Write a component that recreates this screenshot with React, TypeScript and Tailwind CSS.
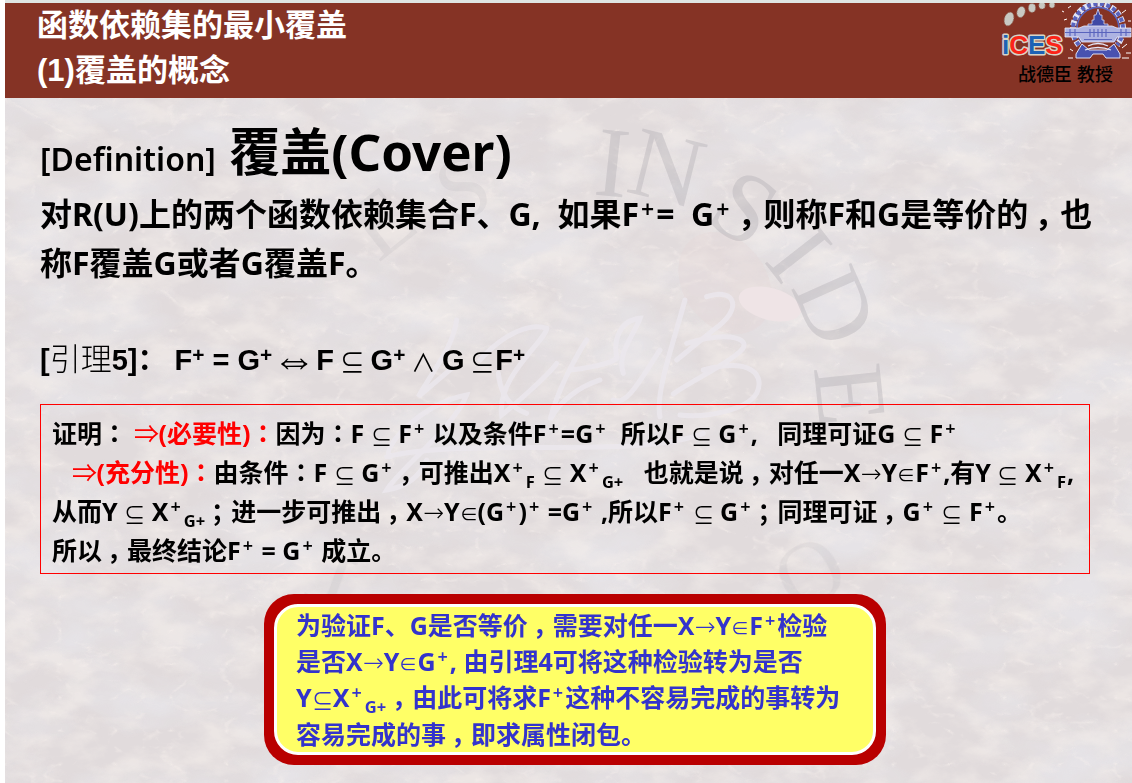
import React from "react";

type Kids = { children: React.ReactNode };

const Sup = ({ children }: Kids) => (
  <sup className="relative top-0 mx-0.5 align-[8px] text-[0.72em] leading-none font-semibold">{children}</sup>
);
const Sub = ({ children }: Kids) => (
  <sub className="relative bottom-0 mx-px align-[-6px] text-[0.66em] leading-none">{children}</sub>
);
const Arrow = ({ children }: Kids) => (
  <span className="leading-none font-extralight [font-family:'DejaVu_Sans',sans-serif]">{children}</span>
);
const Sym = ({ children }: Kids) => (
  <span className="align-[-2px] text-[0.85em] leading-none font-extralight [font-family:'DejaVu_Sans',sans-serif]">{children}</span>
);
const In = () => (
  <span className="text-[0.72em] leading-none font-extralight [font-family:'DejaVu_Sans',sans-serif]">∈</span>
);
const Mark = ({ children }: Kids) => (
  <span className="mr-[0.3em] ml-[0.2em] leading-none [font-family:'Noto_Sans_CJK_SC',sans-serif] [font-feature-settings:'halt']">{children}</span>
);
const Colon = () => (
  <span lang="zh-TW" className="leading-none [font-family:'Noto_Sans_CJK_TC',sans-serif]">：</span>
);

function Backdrop() {
  return (
    <svg className="absolute inset-0 h-full w-full" preserveAspectRatio="xMidYMid slice" viewBox="0 0 1127 685" aria-hidden="true">
      <defs>
        <filter id="shade" x="0" y="0" width="100%" height="100%">
          <feTurbulence type="fractalNoise" baseFrequency="0.009 0.016" numOctaves="4" seed="7" />
          <feColorMatrix values="0 0 0 0 0.8  0 0 0 0 0.785  0 0 0 0 0.815  2.6 0 0 0 -1" />
        </filter>
        <filter id="warm" x="0" y="0" width="100%" height="100%">
          <feTurbulence type="fractalNoise" baseFrequency="0.022 0.04" numOctaves="5" seed="12" />
          <feColorMatrix values="0 0 0 0 0.91  0 0 0 0 0.86  0 0 0 0 0.83  0 3 0 0 -1.3" />
        </filter>
        <filter id="glint" x="0" y="0" width="100%" height="100%">
          <feTurbulence type="turbulence" baseFrequency="0.018 0.03" numOctaves="4" seed="3" />
          <feColorMatrix values="0 0 0 0 0.95  0 0 0 0 0.89  0 0 0 0 0.86  -5 0 0 0 0.75" />
        </filter>
      </defs>
      <rect width="1127" height="685" fill="#e1dbdc" />
      <rect width="1127" height="685" filter="url(#shade)" opacity="0.85" />
      <rect width="1127" height="685" filter="url(#warm)" opacity="0.55" />
      <rect width="1127" height="685" filter="url(#glint)" opacity="0.6" />
      <ellipse cx="720" cy="185" rx="42" ry="55" fill="#e4d8d7" opacity="0.35" transform="rotate(-35 720 185)" />
      <ellipse cx="765" cy="206" rx="32" ry="16" fill="#efe4e6" transform="rotate(15 765 206)" />
      <g fill="#aaa6ad" opacity="0.34" fontFamily="'Liberation Serif', serif" fontWeight="400" fontSize="100" textAnchor="middle">
        <text transform="translate(604 98) rotate(6)">I</text>
        <text transform="translate(654 102) rotate(14)">N</text>
        <text transform="translate(722 138) rotate(32)">S</text>
        <text transform="translate(768 176) rotate(52)">I</text>
        <text transform="translate(800 222) rotate(66)">D</text>
        <text transform="translate(812 300) rotate(84)">E</text>
      </g>
      <g fill="#aaa6ad" opacity="0.15" fontFamily="'Liberation Serif', serif" fontWeight="400" fontSize="90" textAnchor="middle">
        <text transform="translate(395 148) rotate(-38)">E</text>
        <text transform="translate(468 118) rotate(-20)">S</text>
        <text transform="translate(340 460) rotate(200)">T</text>
        <text transform="translate(790 450) rotate(150)">O</text>
      </g>
      <g transform="translate(335 162) scale(.3333)" fill="none" stroke="#ece8ee" strokeWidth="15" strokeLinecap="round" opacity="0.8">
        <path d="M350 180C340 260 280 330 235 410L335 325" />
        <path d="M150 590C120 570 240 430 380 405C345 500 175 630 140 690C200 680 240 650 260 600" />
        <path d="M420 300C500 210 580 190 620 205C620 240 470 350 485 465C530 430 630 340 650 310" />
        <path d="M475 340C480 390 500 440 560 460" />
        <path d="M740 240C700 300 650 400 630 480C660 420 720 380 780 360" />
        <path d="M690 330C780 320 840 300 830 290C820 240 840 180 900 175C880 230 830 280 850 340" />
        <path d="M820 420C860 440 900 360 960 270" />
        <path d="M1035 120C1000 250 945 400 960 470" />
        <path d="M1100 110C1190 80 1210 150 1120 210L1010 300M1040 250C1180 210 1240 240 1200 275C1150 320 1040 370 1000 402M1090 330C1240 290 1275 350 1250 400C1220 450 1100 475 1020 465" />
        <path d="M140 590C400 530 900 600 1090 520" />
      </g>
    </svg>
  );
}

function Emblem() {
  return (
    <svg className="block h-[60px] w-[132px]" viewBox="0 0 132 60" role="img" aria-label="iCES">
      <g fill="#c9c9c3" stroke="#8d6a5c" strokeWidth=".8" strokeDasharray="1.5 1">
        <ellipse cx="9" cy="16" rx="4.6" ry="7" transform="rotate(18 9 16)" />
        <ellipse cx="21" cy="9" rx="4" ry="5.6" transform="rotate(18 21 9)" />
        <ellipse cx="32" cy="5" rx="3.6" ry="4.4" />
        <ellipse cx="42" cy="2.5" rx="3.2" ry="3.6" />
        <ellipse cx="52" cy="2" rx="2.8" ry="3" />
      </g>
      <text x="2" y="51" fontFamily="'Liberation Sans', sans-serif" fontWeight="700" fontSize="26" stroke="#d9d3c5" strokeWidth="3" strokeLinejoin="round" paintOrder="stroke">
        <tspan fill="#1d62b4">i</tspan>
        <tspan fill="#fb2418">C</tspan>
        <tspan fill="#1d62b4">E</tspan>
        <tspan fill="#fb2418">S</tspan>
      </text>
      <g fill="none" stroke="#5963bd">
        <path d="M79 42A25 25 0 1 1 117 42" stroke="#e2e4f4" strokeWidth="6" strokeDasharray="5 2" />
        <path d="M79 42A25 25 0 1 1 117 42" strokeWidth="4" strokeDasharray="4 2.5" />
        <path d="M82 39A21 21 0 1 1 114 39" strokeWidth="1.6" />
      </g>
      <path d="M98 6l2 6h2v5h2v4h4v4H88v-4h4v-4h2v-5h2z" fill="#3f49a5" stroke="#d8dbf2" strokeWidth=".8" />
      <path d="M65 25h14l5-2h28l5 2h14v9h-14l-3 5H82l-3-5H65z" fill="#aeb3e2" stroke="#eceefb" strokeWidth=".8" />
      <path d="M65 29.500h66M84 36.500h28M90 26v8M94 26v8M98 26v8M102 26v8M106 26v8M70 26v7M75 26v7M121 26v7M126 26v7" stroke="#5963bd" strokeWidth="1.1" />
      <path d="M76 51l6-10 7 6h18l7-6 6 10v4h-14l-3-4H93l-3 4H76z" fill="#4852b0" stroke="#dfe1f5" />
      <path d="M88 43q10-5 20 0M85 47q13-5 26 0" fill="none" stroke="#e5e7f8" strokeWidth="1.3" />
      <path d="M62 8l2 1M64 17l3-1M70 46l3 2M68 55h5M122 10l4-3M128 18h3M122 45l5-4M122 55h7M126 50h5M68 5l3-2" stroke="#fff" strokeWidth="1" />
    </svg>
  );
}

export default function App() {
  return (
    <main lang="zh-CN" className="flex min-h-screen flex-col bg-white pl-[5px] font-bold text-black [font-family:'Noto_Sans','Noto_Sans_CJK_SC',sans-serif]">
      <header className="flex justify-between border-t-[3px] border-[#dfe5e3] bg-[#853325] pb-[5px] pl-8 text-white [font-family:'Liberation_Sans','Noto_Sans_CJK_SC',sans-serif]">
        <h1 className="text-[31px] leading-[45px]">函数依赖集的最小覆盖<br />(1)覆盖的概念</h1>
        <div>
          <Emblem />
          <p className="pl-[18px] text-[18px] leading-6 font-medium text-black">战德臣 教授</p>
        </div>
      </header>
      <section className="relative grow overflow-hidden">
        <Backdrop />
        <div className="relative px-[35px] pt-[23px] pb-[18px]">
          <h2 className="text-[51px] leading-[61px]"><span className="text-[32px] font-semibold">[Definition]</span> 覆盖(Cover)</h2>
          <p className="text-[32px] leading-[49px] whitespace-nowrap">对R(U)上的两个函数依赖集合F、G,&nbsp; 如果F<Sup>+</Sup>=&nbsp; G<Sup>+</Sup><Mark>，</Mark>则称F和G是等价的<Mark>，</Mark>也<br />称F覆盖G或者G覆盖F。</p>
          <p className="mt-12 text-[29px] leading-[49px] whitespace-nowrap [font-family:'Liberation_Sans','Noto_Sans_CJK_SC',sans-serif] [&_sup]:mx-0">[<span className="text-[31px] font-light">引理</span>5]：&nbsp;F<Sup>+</Sup> = G<Sup>+</Sup><span className="align-[-4px] text-[44px] leading-none font-normal [font-family:'Liberation_Serif',serif]">⇔</span>F&thinsp;<Sym>⊆</Sym>&thinsp;G<Sup>+</Sup>&thinsp;<Sym>∧</Sym>&thinsp;G&thinsp;<Sym>⊆</Sym>F<Sup>+</Sup></p>
          <p className="mt-[19px] mr-[7px] border border-[#ff0000] px-[11px] pt-[9px] pb-[3px] text-[25px] leading-[39px] whitespace-nowrap">
            证明<Colon /> <span className="text-[#ff0000]"><Arrow>⇒</Arrow>(必要性)<Colon /></span>因为<Colon />F <Sym>⊆</Sym> F<Sup>+</Sup> 以及条件F<Sup>+</Sup>=G<Sup>+</Sup>&nbsp; 所以F <Sym>⊆</Sym> G<Sup>+</Sup>,&nbsp;&nbsp; 同理可证G <Sym>⊆</Sym> F<Sup>+</Sup><br />
            &nbsp;&nbsp; <span className="text-[#ff0000]"><Arrow>⇒</Arrow>(充分性)<Colon /></span>由条件<Colon />F <Sym>⊆</Sym> G<Sup>+</Sup><Mark>，</Mark>可推出X<Sup>+</Sup><Sub>F</Sub> <Sym>⊆</Sym> X<Sup>+</Sup><Sub>G+</Sub>&nbsp;&nbsp; 也就是说<Mark>，</Mark>对任一X<Arrow>→</Arrow>Y<In />F<Sup>+</Sup>,有Y <Sym>⊆</Sym> X<Sup>+</Sup><Sub>F</Sub>,<br />
            从而Y <Sym>⊆</Sym> X<Sup>+</Sup><Sub>G+</Sub><Mark>；</Mark>进一步可推出<Mark>，</Mark>X<Arrow>→</Arrow>Y<In />(G<Sup>+</Sup>)<Sup>+</Sup> =G<Sup>+</Sup> ,所以F<Sup>+</Sup> <Sym>⊆</Sym> G<Sup>+</Sup><Mark>；</Mark>同理可证<Mark>，</Mark>G<Sup>+</Sup> <Sym>⊆</Sym> F<Sup>+</Sup>。<br />
            所以<Mark>，</Mark>最终结论F<Sup>+</Sup> = G<Sup>+</Sup> 成立。
          </p>
          <div className="mt-5 ml-[224px] max-w-[622px] rounded-[30px] bg-[#b90000] px-[10px] py-[10px]">
            <p className="rounded-[24px] border-[3px] border-white bg-[#ffff66] pl-[19px] text-[25px] leading-[36px] whitespace-nowrap text-[#3333cc]">
              为验证F、G是否等价<Mark>，</Mark>需要对任一X<Arrow>→</Arrow>Y<In />F<Sup>+</Sup>检验<br />
              是否X<Arrow>→</Arrow>Y<In />G<Sup>+</Sup>, 由引理4可将这种检验转为是否<br />
              Y<Sym>⊆</Sym>X<Sup>+</Sup><Sub>G+</Sub><Mark>，</Mark>由此可将求F<Sup>+</Sup>这种不容易完成的事转为<br />
              容易完成的事<Mark>，</Mark>即求属性闭包。
            </p>
          </div>
        </div>
      </section>
    </main>
  );
}
